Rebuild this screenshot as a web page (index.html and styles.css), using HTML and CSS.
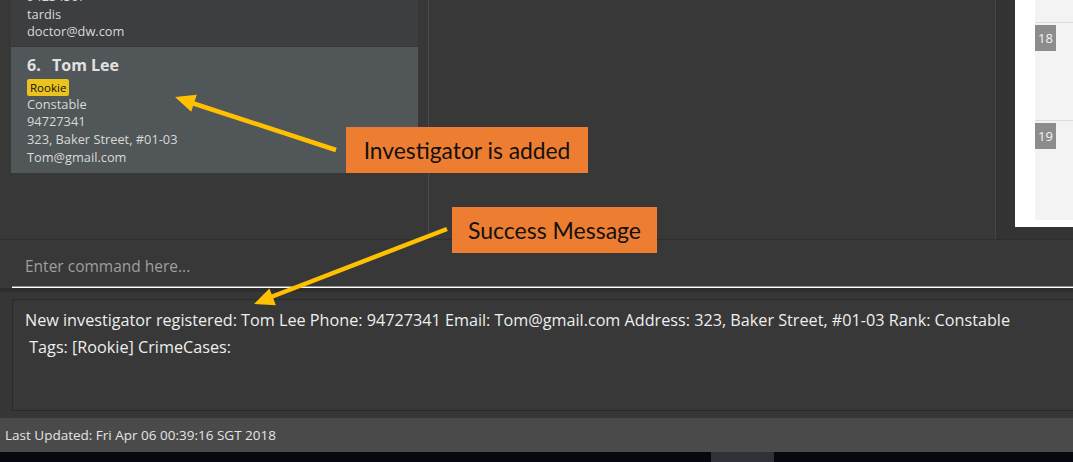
FILE: index.html
```html
<!DOCTYPE html>
<html>
<head>
<meta charset="utf-8">
<link rel="stylesheet" href="styles.css">
</head>
<body>
<div class="app">
  <div class="main">
    <div class="left">
      <div class="list">
        <div class="card card-dark">
          <div class="line">94234567</div>
          <div class="line">tardis</div>
          <div class="line">doctor@dw.com</div>
        </div>
        <div class="card card-sel">
          <div class="title"><span class="num">6.</span>Tom Lee</div>
          <div class="tags"><span class="tag">Rookie</span></div>
          <div class="line">Constable</div>
          <div class="line">94727341</div>
          <div class="line">323, Baker Street, #01-03</div>
          <div class="line">Tom@gmail.com</div>
        </div>
      </div>
    </div>
    <div class="middle"></div>
    <div class="gutter">
      <div class="right">
        <div class="cal">
          <div class="cal-row cal-top"></div>
          <div class="cal-row"><span class="badge">18</span></div>
          <div class="cal-row cal-last"><span class="badge">19</span></div>
        </div>
      </div>
    </div>
  </div>
  <div class="cmd">
    <div class="cmd-input">Enter command here...</div>
  </div>
  <div class="result">
    <div class="result-box">
      <div class="rline">New investigator registered: Tom Lee Phone: 94727341 Email: Tom@gmail.com Address: 323, Baker Street, #01-03 Rank: Constable</div>
      <div class="rline"> Tags: [Rookie] CrimeCases:</div>
    </div>
  </div>
  <div class="status">Last Updated: Fri Apr 06 00:39:16 SGT 2018</div>
  <div class="taskbar"><span class="task-item"></span></div>
</div>

<div class="callout callout-added">Investigator is added</div>
<div class="callout callout-success">Success Message</div>

<svg class="arrows" width="1073" height="462" viewBox="0 0 1073 462">
  <line x1="336" y1="150" x2="192" y2="103" stroke="#ffc000" stroke-width="4.5"/>
  <polygon points="175,97 196.8,94.7 191.2,111.8" fill="#ffc000"/>
  <line x1="447" y1="229" x2="271" y2="297" stroke="#ffc000" stroke-width="4.5"/>
  <polygon points="254,304 275.9,305.2 269.4,288.4" fill="#ffc000"/>
</svg>
</body>
</html>
```
FILE: styles.css
```css
html, body {
  margin: 0;
  padding: 0;
}
body {
  width: 1073px;
  height: 462px;
  overflow: hidden;
  background: #383838;
  font-family: "Open Sans", "Noto Sans", sans-serif;
  position: relative;
}
.app {
  display: flex;
  flex-direction: column;
  height: 462px;
}
.main {
  height: 239px;
  display: flex;
  border-bottom: 1px solid #2e2e2e;
}
.left {
  width: 429px;
  flex: none;
  box-sizing: border-box;
  padding: 0 10px 0 11px;
  border-right: 1px solid #4c4c4c;
  overflow: hidden;
  background: #383838;
}
.list {
  margin-top: -12px;
  display: flex;
  flex-direction: column;
  gap: 1px;
}
.card {
  padding: 0 16px;
  color: #d9d9d9;
  font-size: 12.8px;
}
.card-dark {
  background: #3c3e3f;
  padding-bottom: 5px;
}
.card-sel {
  background: #515658;
  padding-top: 7px;
  padding-bottom: 7px;
}
.line {
  line-height: 17.6px;
  height: 17.6px;
  white-space: nowrap;
}
.title {
  font-weight: bold;
  font-size: 16px;
  line-height: 22px;
  color: #e2e2e2;
  display: flex;
}
.num {
  width: 25px;
}
.tags {
  margin-top: 3px;
  height: 17px;
  display: flex;
}
.tag {
  background: #ecc31e;
  color: #111;
  font-size: 11.5px;
  line-height: 17px;
  padding: 0 3px;
  border-radius: 2px;
}
.middle {
  flex: 1;
  background: #383838;
  border-right: 1px solid #454545;
}
.gutter {
  width: 77px;
  flex: none;
  box-sizing: border-box;
  background: #333333;
  padding-left: 19px;
}
.right {
  background: #ffffff;
  height: 227px;
  padding-left: 20px;
  box-sizing: border-box;
}
.cal {
  background: #f3f3f3;
  height: 220px;
  display: flex;
  flex-direction: column;
}
.cal-row {
  height: 99px;
  border-bottom: 1px solid #dcdcdc;
  padding-top: 2px;
  box-sizing: border-box;
}
.cal-top {
  height: 23px;
  padding-top: 0;
}
.cal-last {
  border-bottom: none;
}
.badge {
  display: inline-block;
  width: 21px;
  height: 26px;
  line-height: 26px;
  text-align: center;
  background: #8c8c8c;
  color: #f4f4f4;
  font-size: 13px;
}
.cmd {
  height: 48px;
  padding: 4px 0 0 12px;
  box-sizing: border-box;
  background: #383838;
}
.cmd-input {
  height: 44px;
  box-sizing: border-box;
  padding: 11px 0 0 13px;
  font-size: 15.5px;
  line-height: 22px;
  color: #9e9e9e;
  border-bottom: 1px solid #ffffff;
  box-shadow: inset 0 -1px 0 #8f8f8f;
}
.result {
  height: 130px;
  box-sizing: border-box;
  border-top: 4px solid #2e2e2e;
  background: #363636;
  padding: 7px 0 7px 12px;
}
.result-box {
  height: 112px;
  box-sizing: border-box;
  border: 1px solid #2a2a2a;
  border-right: none;
  background: #383838;
  padding: 7px 0 0 12px;
}
.rline {
  font-size: 16.2px;
  line-height: 27px;
  color: #eeeeee;
  white-space: pre;
}
.status {
  height: 34px;
  background: #4a4a4a;
  color: #e4e4e4;
  font-size: 13.5px;
  line-height: 34px;
  padding-left: 5px;
}
.taskbar {
  height: 10px;
  background: #05080c;
  display: flex;
  padding-left: 711px;
}
.task-item {
  width: 63px;
  background: #2e3238;
}
.callout {
  position: absolute;
  background: #ed7d31;
  color: #111;
  font-family: "Lato", "Open Sans", sans-serif;
  height: 46px;
  line-height: 46px;
  text-align: center;
  box-sizing: border-box;
}
.callout-added {
  left: 346px;
  top: 127px;
  width: 242px;
  font-size: 22.8px;
}
.callout-success {
  left: 452px;
  top: 207px;
  width: 205px;
  font-size: 23px;
}
.arrows {
  position: absolute;
  left: 0;
  top: 0;
  pointer-events: none;
}
```
